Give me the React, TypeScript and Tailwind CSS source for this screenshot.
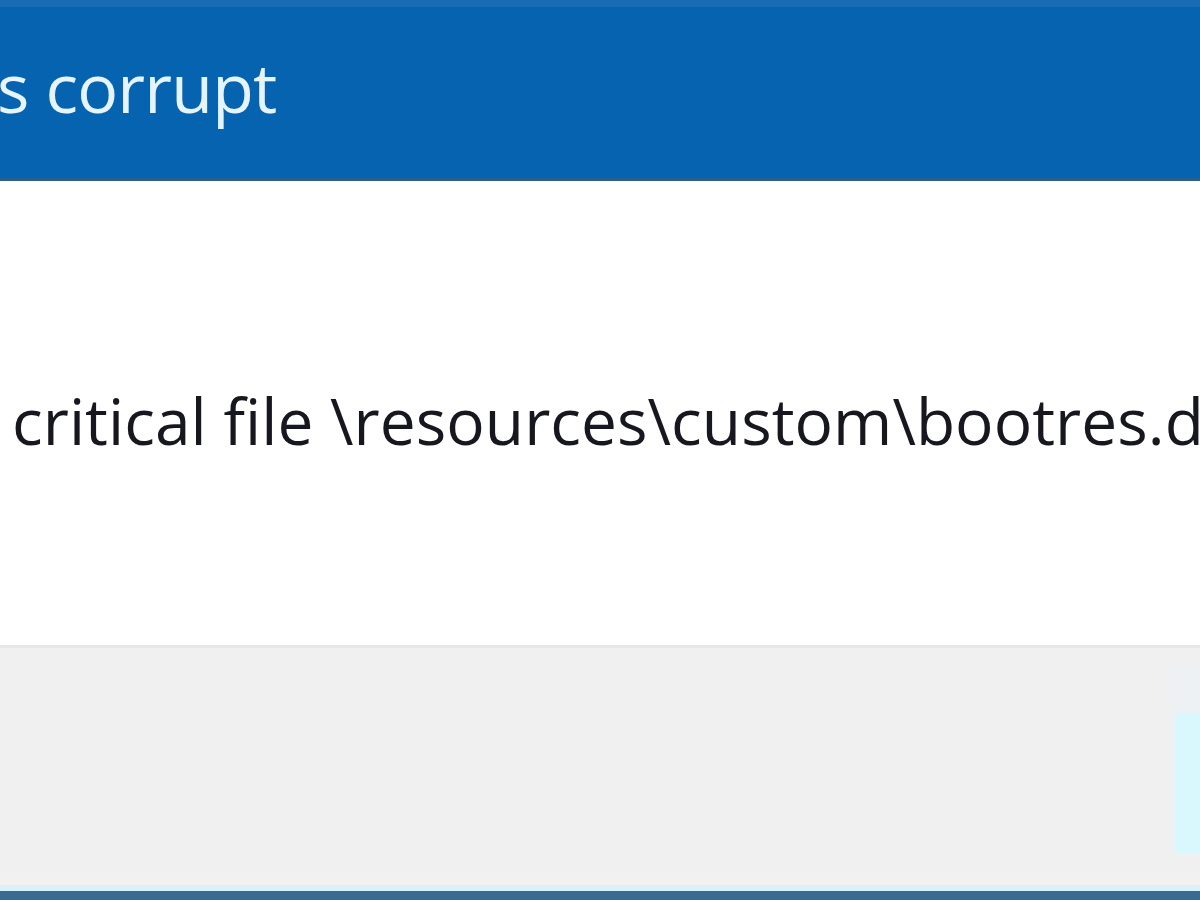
export default function App() {
  return (
    <div className="w-[1200px] h-[900px] overflow-hidden flex flex-col bg-white" style={{ fontFamily: '"Open Sans", "Noto Sans", sans-serif' }}>
      {/* Title bar */}
      <div className="h-[181px] shrink-0 flex items-center bg-[#0563b0] border-t-[7px] border-[#196bb4] border-b-[3px] border-b-[#2a5f8c] overflow-hidden">
        <h1 className="ml-[-3px] mt-[-12px] text-[68px] leading-none text-[#e6f4ff] whitespace-nowrap tracking-[-0.8px]">s corrupt</h1>
      </div>

      {/* Message body */}
      <div className="flex-1 flex items-center bg-white overflow-hidden">
        <p className="ml-[12px] mt-[16px] text-[64px] leading-none text-[#17171f] whitespace-nowrap tracking-[0.05px]">
          critical file \resources\custom\bootres.dll is corrupt.
        </p>
      </div>

      {/* Button area */}
      <div className="h-[240px] shrink-0 flex flex-col bg-[#f0f0f0] border-t-[3px] border-[#e7e7e7]">
        <div className="flex-1 flex justify-end items-start pt-[20px]">
          <div className="w-[30px] h-[185px] border-l-[5px] border-t-[45px] border-[#eef1f4] bg-[#d9f8fe]" />
        </div>
        <div className="h-[6px] bg-[#f2f1ef]" />
      </div>
      <div className="h-[6px] shrink-0 bg-[#d8f2fb]" />
      <div className="h-[9px] shrink-0 bg-[#3b6a90]" />
    </div>
  );
}
